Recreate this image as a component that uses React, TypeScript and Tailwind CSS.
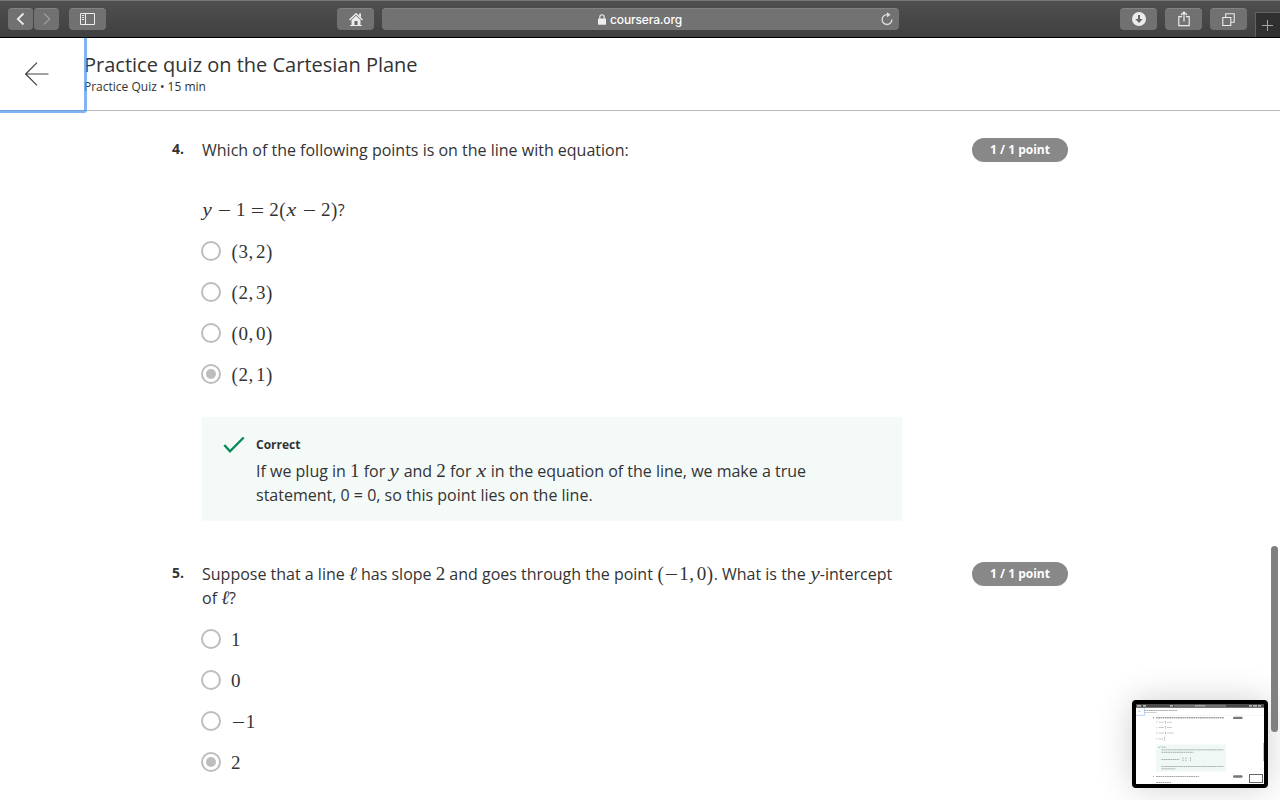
import type { ReactNode } from 'react';

const MATH_WIDTH: Record<string, string> = {
  '(': 'w-[0.389em] scale-y-110',
  ')': 'w-[0.389em] scale-y-110',
  ',': 'w-[0.425em] text-left pl-[0.03em]',
  '−': 'w-[0.778em] scale-x-[1.25] translate-y-px',
  '=': 'w-[0.778em] scale-x-[1.25] translate-y-px',
  x: 'w-[0.572em] italic scale-x-[1.15]',
  y: 'w-[0.53em] italic scale-x-[1.1]',
  ℓ: 'w-[0.417em] italic',
  ' ': 'w-[0.24em]',
};

function MathText({ children }: { children: string }) {
  return (
    <span className="whitespace-nowrap font-['Liberation_Serif',serif] text-[19px] leading-none">
      {Array.from(children).map((c, i) => (
        <span key={i} className={`inline-block text-center whitespace-pre ${MATH_WIDTH[c] ?? 'w-[0.5em]'}`}>
          {c}
        </span>
      ))}
    </span>
  );
}

function ToolButton({ className, children }: { className: string; children: ReactNode }) {
  return (
    <button
      className={`flex h-[22px] shrink-0 items-center justify-center rounded-[4px] border-t border-[#828282] bg-[#717171] text-[#ececec] ${className}`}
    >
      {children}
    </button>
  );
}

function Toolbar() {
  return (
    <div className="flex h-[38px] shrink-0 items-start border-t border-b border-t-[#767676] border-b-black bg-linear-to-b from-[#4f4f4f] to-[#404040] pt-[7px] pl-2">
      <ToolButton className="w-[25px]">
        <svg width="10" height="14" viewBox="0 0 10 14" fill="none" stroke="currentColor" strokeWidth="1.8" className="-mt-px">
          <path d="M7.500 1.500 1.800 7 7.500 12.500" />
        </svg>
      </ToolButton>
      <ToolButton className="ml-px w-[25px]">
        <svg width="10" height="14" viewBox="0 0 10 14" fill="none" stroke="#999" strokeWidth="1.5" className="-mt-px">
          <path d="M2 1.500 7.700 7 2 12.500" />
        </svg>
      </ToolButton>
      <ToolButton className="ml-2.5 w-[37px]">
        <svg width="15" height="12" viewBox="0 0 15 12" fill="none" stroke="currentColor" className="-mt-px">
          <path d="M.5.5h14v11H.5zM5.500.5v11M2 2.500h2M2 4.500h2M2 6.500h2" />
        </svg>
      </ToolButton>
      <ToolButton className="ml-[231px] w-[37px]">
        <svg width="16" height="15" viewBox="0 0 16 15">
          <path d="M1.500 8 8 1.800 14.500 8" fill="none" stroke="currentColor" strokeWidth="1.400" />
          <path d="M11 1.500h2v4l-2-2zM8 3.700l4.500 4.200V13H14v1H2v-1h1.500V7.900z" fill="currentColor" />
          <path d="M6.500 9h3v4h-3z" fill="#656565" />
        </svg>
      </ToolButton>
      <div className="ml-2 flex h-[22px] w-[517px] items-center rounded-[4px] border-t border-[#828282] bg-[#727272] text-white">
        <div className="flex flex-1 items-center justify-center gap-1 pl-[18px]">
          <svg width="8" height="11" viewBox="0 0 8 11" className="-mt-px">
            <rect y="4.500" width="8" height="6.200" rx=".6" fill="#eee" />
            <path d="M1.800 5V3a2.200 2.200 0 0 1 4.400 0v2" fill="none" stroke="#eee" strokeWidth="1.100" />
          </svg>
          <span className="font-[Inter,sans-serif] text-[12px] leading-4 font-medium tracking-[-0.14px]">coursera.org</span>
        </div>
        <svg width="14" height="14" viewBox="0 0 14 14" className="mr-[5px] -mt-px" fill="none" stroke="#e0e0e0" strokeWidth="1.300">
          <path d="M8 2.700H7a4.900 4.900 0 1 0 4.900 4.900" />
          <path d="M7 .2v5l3.600-2.500z" fill="#e0e0e0" stroke="none" />
        </svg>
      </div>
      <ToolButton className="ml-[221px] w-[37px]">
        <svg width="14" height="14" viewBox="0 0 14 14" className="-mt-px">
          <circle cx="7" cy="7" r="7" fill="currentColor" />
          <path d="M6 3h2v4h2.700L7 11 3.300 7H6z" fill="#666" />
        </svg>
      </ToolButton>
      <ToolButton className="ml-2 w-[37px]">
        <svg width="12" height="16" viewBox="0 0 12 16" fill="none" stroke="currentColor" strokeWidth="1.200" className="-mt-[2px]">
          <path d="M4 5.600H.8v9h10.400v-9H8M6 10.500V1.200M3 4l3-3 3 3" />
        </svg>
      </ToolButton>
      <ToolButton className="ml-2 w-[37px]">
        <svg width="13" height="13" viewBox="0 0 13 13" fill="none" stroke="currentColor" strokeWidth="1.100" className="-mt-px">
          <path d="M.8 4.500h8v8h-8zM3.700 4.500V.8h8.500v8.500H8.800" />
        </svg>
      </ToolButton>
      <div className="mt-1 ml-2 flex h-[25px] flex-1 items-center justify-center border-t border-l border-[#626262] bg-[#303030] pr-px">
        <svg width="11" height="11" viewBox="0 0 11 11" stroke="#a5a5a5">
          <path d="M5.500 0v11M0 5.500h11" />
        </svg>
      </div>
    </div>
  );
}

function Option({ checked = false, label }: { checked?: boolean; label: string }) {
  return (
    <div className="flex h-[41px] items-center">
      <span className="-ml-px flex size-5 items-center justify-center rounded-full border-2 border-[#bdbdbd]">
        {checked && <span className="size-2.5 rounded-full bg-[#bdbdbd]" />}
      </span>
      <span className="ml-2.5 flex pt-px">
        <MathText>{label}</MathText>
      </span>
    </div>
  );
}

function Question({ number, prompt, children }: { number: string; prompt: ReactNode; children: ReactNode }) {
  return (
    <section className="flex pl-[172px]">
      <div className="w-[30px] pt-[3px] text-[14px] leading-4 font-bold">{number}</div>
      <div className="w-[700px]">
        <div className="text-[16px] leading-6">{prompt}</div>
        {children}
      </div>
      <div className="ml-[70px] flex h-6 w-24 items-center justify-center rounded-full bg-[#888] text-[12px] font-bold text-white">
        1 / 1 point
      </div>
    </section>
  );
}

function Thumbnail() {
  return (
    <div className="absolute top-[700px] left-[1132px] h-[88px] w-[136px] rounded-[4px] border-4 border-black bg-white shadow-[0_0_34px_rgba(0,0,0,0.19)]">
      <svg width="128" height="80" viewBox="0 0 128 80" fill="none">
        <path d="M0 0h128v3.800H0z" fill="#494949" />
        <path d="M1 1.800h4M7 1.800h3M34 1.800h3M113 1.800h3M117 1.800h4M122 1.800h3" stroke="#ddd" strokeWidth="1.300" />
        <path d="M38 1.800h52" stroke="#777" strokeWidth="2" />
        <path d="M59 1.800h10" stroke="#ccc" strokeDasharray="1.500 .3" />
        <path d="M0 11.300h128" stroke="#ddd" strokeWidth=".3" />
        <path d="M8.500 4v7.400H0" stroke="#83b3f1" strokeWidth=".5" />
        <path d="M5 7.300H2.500m1-1-1 1 1 1" stroke="#777" strokeWidth=".3" />
        <g stroke="#aaa" strokeDasharray="1.800 .4">
          <path d="M8.500 6.500h33" />
          <path d="M8.500 8.500h12" strokeWidth=".7" />
          <path d="M17 13.800h1M20 13.800h68" stroke="#777" />
          <path d="M23 18.300h5M31 18.300h5M23 23.500h5M31 23.500h5M23 29h5M31 29h7M23 35h4" strokeWidth=".7" />
          <path d="M17 72.500h1M20 72.500h43M20 78.500h15" />
        </g>
        <path d="M29.500 17v3M29.500 22v3M29.500 27.500v3M28.500 33v3.500" stroke="#aaa" strokeDasharray="1 .5" />
        <g stroke="#bbb" strokeWidth=".3">
          <circle cx="21" cy="18" r=".8" />
          <circle cx="21" cy="23.500" r=".8" />
          <circle cx="21" cy="29" r=".8" />
          <circle cx="21" cy="34.500" r=".8" />
        </g>
        <path d="M20 40.500h70v27H20z" fill="#eff8f5" />
        <path d="m22.500 43 .6.700 1.300-1.400" stroke="#0a9362" strokeWidth=".5" />
        <g stroke="#94a19e" strokeDasharray="1.800 .4" strokeWidth=".8">
          <path d="M25.500 43.200h4.500M25.500 45.800h62M25.500 48.300h32M25.500 55.500h18M25.500 62.500h62M25.500 64.800h14" />
          <path d="M47 53.500v4M50 53.500v4M54.500 53.500v4" strokeDasharray="1.500 .7" />
        </g>
        <rect x="97" y="12.700" width="9.600" height="2.400" rx="1.200" fill="#777" />
        <rect x="97" y="71.300" width="9.600" height="2.400" rx="1.200" fill="#777" />
        <path d="M127.500 39v18" stroke="#999" strokeWidth=".6" />
        <rect x="113.500" y="70.500" width="13" height="8" fill="#fff" stroke="#666" />
      </svg>
    </div>
  );
}

export default function App() {
  return (
    <div className="relative flex h-[800px] w-[1280px] flex-col overflow-hidden bg-white font-['Open_Sans',sans-serif] text-[#333]">
      <Toolbar />
      <header className="relative flex h-[73px] shrink-0 border-b border-[#b9b9b9]">
        <button className="flex w-[84px] items-center pl-[25px]">
          <svg width="24" height="24" viewBox="0 0 24 24" fill="none" stroke="#444" strokeWidth="1.200">
            <path d="M23.500 12H1M12 .7.700 12 12 23.300" />
          </svg>
        </button>
        <div className="pt-[13px]">
          <h1 className="text-[20px] leading-7">Practice quiz on the Cartesian Plane</h1>
          <p className="text-[12px] leading-4">Practice Quiz • 15 min</p>
        </div>
        <div className="absolute top-0 left-0 h-[75px] w-[87px] rounded-br-[3px] border-r-3 border-b-3 border-[#4d94f0]/70" />
      </header>
      <main className="pt-[27px]">
        <Question number="4." prompt="Which of the following points is on the line with equation:">
          <div className="mt-9 mb-2 h-6 text-[16px] leading-6">
            <MathText>y − 1 = 2(x − 2)</MathText>?
          </div>
          <Option label="(3,2)" />
          <Option label="(2,3)" />
          <Option label="(0,0)" />
          <Option label="(2,1)" checked />
          <div className="mt-[23px] flex h-[104px] bg-[#f4faf8]">
            <div className="w-[54px] pt-[19px] pl-[21px]">
              <svg width="22" height="18" viewBox="0 0 22 18" fill="none" stroke="#088c57" strokeWidth="2.400">
                <path d="m1.300 9 5.700 6.300L20.700 1.500" />
              </svg>
            </div>
            <div className="pt-5">
              <div className="mb-1.5 text-[12px] leading-4 font-bold">Correct</div>
              <p className="w-[570px] text-[16px] leading-6">
                If we plug in <MathText>1</MathText> for <MathText>y</MathText> and <MathText>2</MathText> for{' '}
                <MathText>x</MathText> in the equation of the line, we make a true
                <br />
                statement, 0 = 0, so this point lies on the line.
              </p>
            </div>
          </div>
        </Question>
        <div className="mt-[41px]">
          <Question
            number="5."
            prompt={
              <>
                Suppose that a line <MathText>ℓ</MathText> has slope <MathText>2</MathText> and goes through the point{' '}
                <MathText>(−1,0)</MathText>. What is the <MathText>y</MathText>-intercept
                <br />
                of <MathText>ℓ</MathText>?
              </>
            }
          >
            <div className="mt-2">
              <Option label="1" />
              <Option label="0" />
              <Option label="−1" />
              <Option label="2" checked />
            </div>
          </Question>
        </div>
      </main>
      <Thumbnail />
      <div className="absolute top-[546px] left-[1271px] h-[186px] w-[7px] rounded-full bg-[#808080]" />
    </div>
  );
}
